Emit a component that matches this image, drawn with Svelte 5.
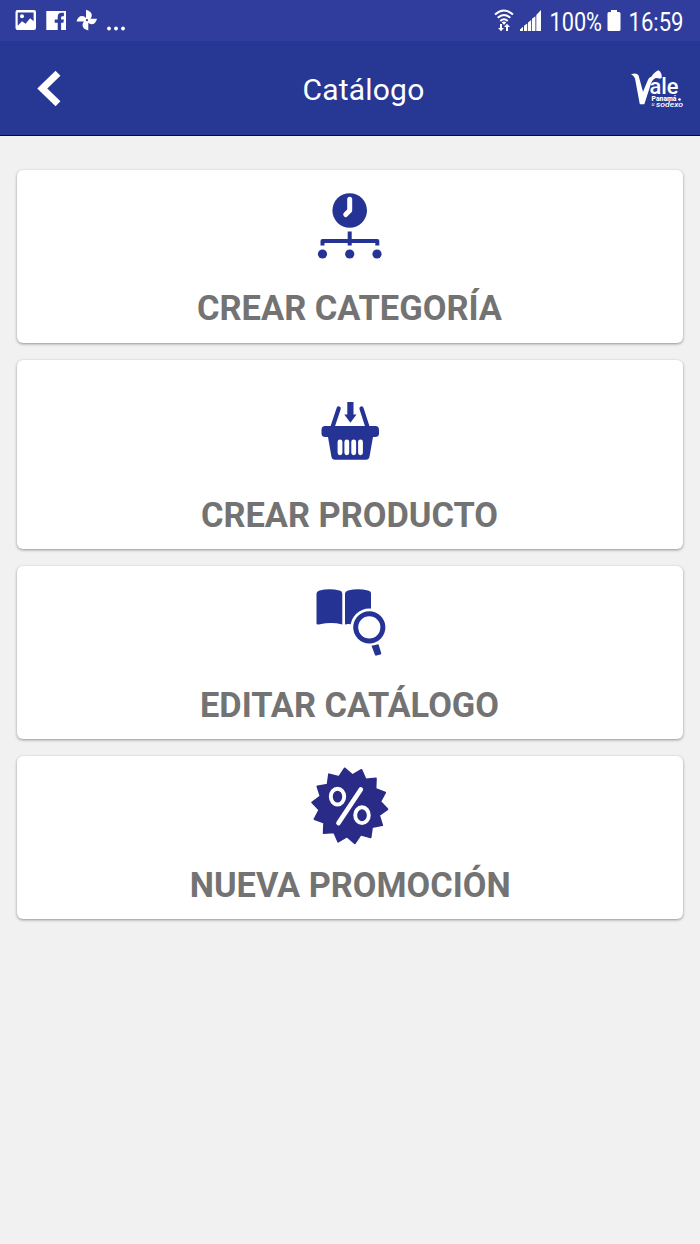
<script>
  const items = [
    { id: 'category', label: 'CREAR CATEGORÍA', height: 173, width: 305, x: -1 },
    { id: 'product', label: 'CREAR PRODUCTO', height: 189, width: 297, x: -1 },
    { id: 'edit', label: 'EDITAR CATÁLOGO', height: 173, width: 299, x: -1 },
    { id: 'promo', label: 'NUEVA PROMOCIÓN', height: 163, width: 321, x: -0.3 }
  ];
  const seal = Array.from({ length: 28 }, (_, i) => {
    const a = ((262.3 + (i * 180) / 14) * Math.PI) / 180;
    const r = i % 2 ? 30.8 : 37.8;
    return `${(49.8 + r * Math.cos(a)).toFixed(2)},${(45.8 + r * Math.sin(a)).toFixed(2)}`;
  }).join(' ');
</script>

<div class="screen">
  <div class="status">
    <svg width="140" height="41" viewBox="0 0 140 41" fill="#fff">
      <path fill-rule="evenodd" d="M17.500 10h16.500q2 0 2 2v16q0 2-2 2H17.500q-2 0-2-2V12q0-2 2-2zm.2 2.600v13.200l4.300-4.600 3.600 2.600 4.500-5.500 3.500 3V12.600z" />
      <circle cx="22" cy="16.200" r="2" />
      <path d="M46.300 11h19.700v19H46.300z" />
      <path d="M57.700 30v-7.200h-3v-3.400h3V17q0-4.200 4-4.200h2.200v3.400h-1.500q-1.300 0-1.300 1.400v1.800h2.800l-.5 3.400h-2.300V30z" fill="#303d9c" />
      <path d="M86 19V9.700q5.800 1.500 5.800 5.500 0 2-1.500 3.500h6.700q-1.500 5.500-5.500 5.500-2 0-3.200-1.400v7.700q-5.800-1.500-5.800-5.500 0-2 1.400-3.500H76.500q1.500-5.500 5.500-5.500 2.600 0 4 2z" />
      <circle cx="87" cy="20.200" r="1.100" fill="#303d9c" />
      <circle cx="109" cy="28.500" r="1.900" /><circle cx="116" cy="28.500" r="1.900" /><circle cx="123" cy="28.500" r="1.900" />
    </svg>
    <svg width="220" height="41" viewBox="480 0 220 41" fill="#fff">
      <g fill="none" stroke="#fff" stroke-width="2">
        <path d="M495 14.500q9-8 18 0M497.700 17.800q6.300-5.600 12.600 0M500.300 21q3.700-3.400 7.400 0" />
      </g>
      <path d="M501.800 22.300q2.200-1.600 4.400 0L504 25zM500 24h2v4h2l-3 3.200-3-3.200h2zM506 31v-4h-2l3-3.200 3 3.200h-2v4z" />
      <path d="M520 31v-1.600l3-2.600V31zM524 31v-5.300l3.200-2.300V31zM528 31v-8.600l3.200-2.500V31zM532 31V18.800l3.400-2.600V31zM536.300 31V15l4.700-5v21z" />
      <text x="549.500" y="30.500" font-size="25.500" textLength="52.500" lengthAdjust="spacingAndGlyphs">100%</text>
      <path d="M611 10h6v2h2q1.500 0 1.500 1.500v16q0 1.500-1.500 1.500h-10q-1.500 0-1.500-1.500v-16q0-1.500 1.500-1.500h2z" />
      <text x="628.500" y="30.500" font-size="25.500" textLength="55" lengthAdjust="spacingAndGlyphs">16:59</text>
    </svg>
  </div>

  <header>
    <button aria-label="Atrás">
      <svg width="24" height="38" viewBox="37 69 24 38"><path d="M58 73.300 42.300 88.500 58 103.700" fill="none" stroke="#fff" stroke-width="7" /></svg>
    </button>
    <h1>Catálogo</h1>
    <svg class="logo" width="54" height="40" viewBox="630.500 67.500 54 40" fill="#fff">
      <path d="M631.500 73.800q5.500-2 7.500 1l4.500 16.500 5-12q1-2.500 3.300-3 3-5 7.200-6.500 3.500 2 3.300 7.500l-2 1q-5.500-3-8.500 4l-7 21.500h-4.500L635.500 78q-1-3-4-4.200z" />
      <text x="650" y="93.500" font-size="21.500" font-weight="500" textLength="29" lengthAdjust="spacingAndGlyphs">ale</text>
      <text x="652" y="100.300" font-size="7.500" font-weight="900" textLength="25" lengthAdjust="spacingAndGlyphs">Panamá</text>
      <text x="652" y="105.500" font-size="5.500" font-style="italic">u</text>
      <text x="656.500" y="106" font-size="8" font-weight="500" font-style="italic" textLength="27" lengthAdjust="spacingAndGlyphs">sodexo</text>
      <circle cx="680" cy="99" r="1.300" />
    </svg>
  </header>

  <main>
    {#each items as item (item.id)}
      <section style:height="{item.height}px">
        {#if item.id === 'category'}
          <svg class="icon" width="100" height="90" viewBox="0 0 100 90" fill="#253494">
            <circle cx="49.700" cy="25.500" r="17.300" />
            <path d="M49.700 14.300v11.200l-4 4" fill="none" stroke="#fff" stroke-width="5" stroke-linecap="round" stroke-linejoin="round" />
            <path d="M49.700 46.500v14M22.500 60.500v-4.500h54.800v4.500" fill="none" stroke="#253494" stroke-width="4" stroke-linejoin="round" />
            <circle cx="22.500" cy="69" r="4.600" /><circle cx="49.700" cy="69" r="4.600" /><circle cx="77" cy="69" r="4.600" />
          </svg>
        {:else if item.id === 'product'}
          <svg class="icon" width="100" height="90" viewBox="0 0 100 90" fill="#253494">
            <path d="M32.500 37 38.700 18.500M67.500 37 61.500 18.500" stroke="#253494" stroke-width="4.200" stroke-linecap="round" />
            <path d="M47.300 12h6.200v12.500h3L50.400 32.800l-6.100-8.300h3zM25 36h50.500q3.500 0 3.500 4v3.500q0 3.500-4 3.500h-2L69.500 66.500q-.6 3.300-3.500 3.300H35q-3 0-3.600-3.300L28 47h-2.500q-4 0-4-3.500V40q0-4 3.500-4z" />
            <path d="M40 51.800v11M46.800 51.800v11M53.700 51.800v11M60.500 51.800v11" stroke="#fff" stroke-width="4.800" stroke-linecap="round" />
          </svg>
        {:else if item.id === 'edit'}
          <svg class="icon" width="100" height="90" viewBox="0 0 100 90" fill="#253494">
            <path d="M16.500 14.500q0-2.200 3-3 10-2.500 20 0 2.800.7 2.800 3V45.500q-11-2.800-22.300-.2-3.500.8-3.500-.8zM45 14.500q0-2.200 3-3 10-2.500 20 0 3 .7 3 3V41L53 45.500q-5-1-8 0z" />
            <circle cx="69.300" cy="48.300" r="18.800" fill="#fff" />
            <circle cx="69.300" cy="48.300" r="13.600" fill="#fff" stroke="#253494" stroke-width="5" />
            <path d="M71.500 66.800 78.500 65.200 81.200 74q.4 1.200-.8 1.600l-3.900 1q-1.200.2-1.600-.9z" />
          </svg>
        {:else}
          <svg class="icon" width="100" height="90" viewBox="0 0 100 90">
            <polygon points={seal} fill="#292b86" stroke="#292b86" stroke-width="1.800" stroke-linejoin="round" />
            <g fill="none" stroke="#fff">
              <ellipse cx="37.500" cy="36.600" rx="6.700" ry="7.900" stroke-width="3.900" />
              <ellipse cx="62" cy="55.200" rx="6.800" ry="7.900" stroke-width="3.900" />
              <path d="m60.800 29.500-22.300 33.500" stroke-width="4.700" stroke-linecap="round" />
            </g>
          </svg>
        {/if}
        <svg class="label" width={item.width} height="42" viewBox="0 0 {item.width} 42" role="img">
          <text x={item.x} y="33" font-size="34.500" font-weight="700" textLength={item.width} lengthAdjust="spacingAndGlyphs">{item.label}</text>
        </svg>
      </section>
    {/each}
  </main>
</div>

<style>
  :global(body) { margin: 0; background: #f1f1f1; }
  .screen { min-height: 1244px; font-family: Roboto, sans-serif; background: #f1f1f1; }
  .status { height: 41px; display: flex; justify-content: space-between; background: #303d9c; }
  svg { display: block; }
  header {
    box-sizing: border-box; height: 95px; padding: 0 16px 0 37px;
    display: grid; grid-template-columns: 54px 1fr 54px; align-items: center;
    background: #263794; border-bottom: 1px solid #02026d; color: #fff;
  }
  header button { padding: 0; border: 0; background: none; width: 24px; height: 38px; }
  h1 { margin: 4px 0 0; padding-left: 6px; font-size: 30px; line-height: 36px; font-weight: 400; text-align: center; letter-spacing: 0.200px; }
  main { padding: 34px 17px 0; display: flex; flex-direction: column; gap: 17px; }
  section {
    box-sizing: border-box; padding: 0 0 14px; border-radius: 6px; background: #fff;
    display: flex; flex-direction: column; justify-content: space-between; align-items: center;
    box-shadow: 0 1px 3px rgba(0, 0, 0, 0.400);
  }
  section:nth-child(n + 2) { padding-bottom: 13px; }
  .icon { margin-top: 15px; flex: none; }
  section:nth-child(2) .icon { margin-top: 30px; }
  section:nth-child(3) .icon { margin-top: 13px; }
  section:nth-child(4) .icon { margin-top: 4px; }
  .label { flex: none; overflow: visible; fill: #737373; }
</style>
